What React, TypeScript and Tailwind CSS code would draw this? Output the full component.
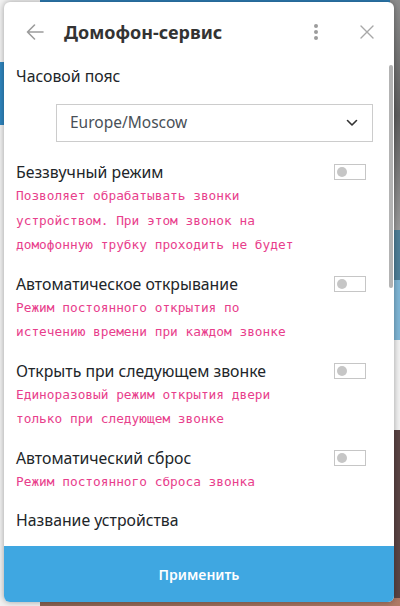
// Intercom service settings modal

const settings = [
  {
    title: 'Беззвучный режим',
    description: 'Позволяет обрабатывать звонки устройством. При этом звонок на домофонную трубку проходить не будет',
  },
  {
    title: 'Автоматическое открывание',
    description: 'Режим постоянного открытия по истечению времени при каждом звонке',
  },
  {
    title: 'Открыть при следующем звонке',
    description: 'Единоразовый режим открытия двери только при следующем звонке',
  },
  {
    title: 'Автоматический сброс',
    description: 'Режим постоянного сброса звонка',
  },
];

function Toggle() {
  return (
    <div className="w-[32px] h-[16px] border border-[#c6c6c6] flex items-center pl-[2px] shrink-0">
      <span className="w-[10px] h-[10px] rounded-full bg-[#c6c6c6]"></span>
    </div>
  );
}

function Background() {
  return (
    <div className="absolute inset-0 bg-[#f2f2f2]">
      <div className="absolute left-[40px] right-0 top-0 h-[40px] bg-[#2d7db4]"></div>
      <div className="absolute left-0 w-[40px] top-[62px] h-[63px] bg-[#2f86bf]"></div>
      <div className="absolute right-0 top-0 w-[10px] h-[230px] bg-gradient-to-b from-[#8d8d8d] via-[#5f5f5f] to-[#9a9a9a]"></div>
      <div className="absolute right-0 top-[230px] w-[10px] h-[50px] bg-[#4f7f98]"></div>
      <div className="absolute right-0 top-[280px] w-[10px] h-[60px] bg-[#7fb6d6]"></div>
      <div className="absolute right-0 top-[430px] w-[10px] bottom-0 bg-[#5b4444]"></div>
      <div className="absolute left-[40px] right-0 bottom-0 h-[8px] bg-gradient-to-r from-[#8a6352] to-[#b07a66]"></div>
    </div>
  );
}

export default function App() {
  return (
    <div className="relative w-[400px] h-[606px] overflow-hidden font-['Noto_Sans',sans-serif]">
      <Background />

      {/* Modal */}
      <div className="absolute left-[4px] top-[2px] w-[390px] h-[600px] bg-white rounded-[6px] shadow-[0_0_6px_rgba(0,0,0,0.35)] flex flex-col">
        {/* Header */}
        <div className="h-[60px] shrink-0 flex items-center pl-[22px] pr-[20px]">
          <svg width="18" height="16" viewBox="0 0 18 16" fill="none" stroke="#9c9c9c" strokeWidth="1.6" strokeLinecap="round" strokeLinejoin="round">
            <path d="M17 8H1.5M8.5 1L1.5 8l7 7" />
          </svg>
          <h1 className="ml-[20px] text-[18px] font-bold text-[#333]">Домофон-сервис</h1>
          <div className="ml-auto flex flex-col gap-[2px] items-center mr-[42px]">
            <span className="w-[4px] h-[4px] rounded-full bg-[#9c9c9c]"></span>
            <span className="w-[4px] h-[4px] rounded-full bg-[#9c9c9c]"></span>
            <span className="w-[4px] h-[4px] rounded-full bg-[#9c9c9c]"></span>
          </div>
          <svg width="14" height="14" viewBox="0 0 14 14" fill="none" stroke="#a8a8a8" strokeWidth="1.4" strokeLinecap="round">
            <path d="M1 1l12 12M13 1L1 13" />
          </svg>
        </div>

        {/* Scrollable body */}
        <div className="relative flex-1 overflow-hidden">
          <div className="pl-[12px] pr-[21px] pt-[3px] text-[#212529]">
            <p className="text-[15.8px] leading-[22px]">Часовой пояс</p>
            <div className="mt-[17px] ml-[40px] h-[38px] border border-[#cccccc] flex items-center pl-[13px] pr-[14px]">
              <span className="text-[15.5px] text-[#495057]">Europe/Moscow</span>
              <svg className="ml-auto" width="12" height="8" viewBox="0 0 12 8" fill="none" stroke="#333" strokeWidth="1.6" strokeLinecap="round" strokeLinejoin="round">
                <path d="M1.5 1.5L6 6l4.5-4.5" />
              </svg>
            </div>

            {settings.map((s, i) => (
              <div key={s.title} className={i === 0 ? 'mt-[19px]' : 'mt-[15px]'}>
                <div className="flex items-center justify-between pr-[7px]">
                  <p className="text-[15.8px] leading-[22px]">{s.title}</p>
                  <Toggle />
                </div>
                <p className="mt-[1px] w-[285px] font-['DejaVu_Sans_Mono',monospace] text-[12.8px] leading-[24.5px] text-[#e83e8c]">
                  {s.description}
                </p>
              </div>
            ))}

            <p className="mt-[15px] text-[15.8px] leading-[22px]">Название устройства</p>
            <div className="mt-[16px] h-[38px] border border-[#cccccc]"></div>
          </div>

          {/* Scrollbar thumb */}
          <div className="absolute right-[1px] top-[3px] w-[4px] h-[223px] rounded-[2px] bg-[#b3b3b3]"></div>
        </div>

        {/* Footer button */}
        <button className="h-[56px] shrink-0 bg-[#3fa7e1] rounded-b-[6px] text-white text-[14px] font-semibold">
          Применить
        </button>
      </div>
    </div>
  );
}
